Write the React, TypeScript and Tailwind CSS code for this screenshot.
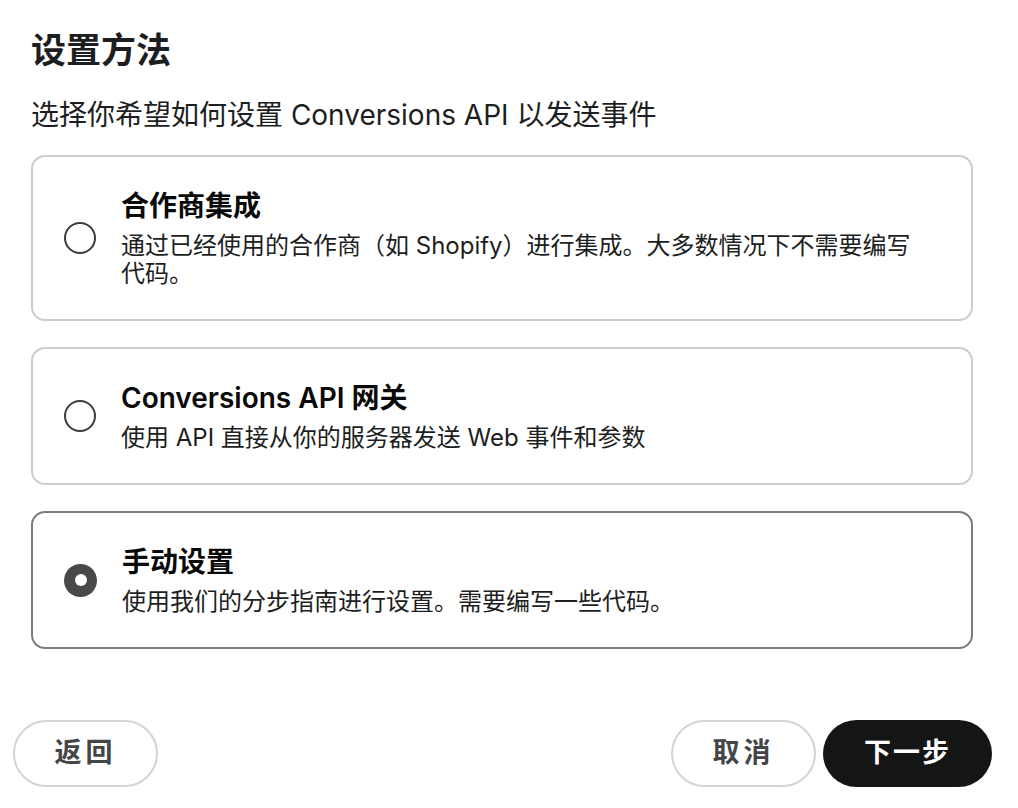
import React, { useState } from 'react'

type Option = {
  id: string
  title: string
  description: string
}

const options: Option[] = [
  {
    id: 'partner',
    title: '合作商集成',
    description: '通过已经使用的合作商（如 Shopify）进行集成。大多数情况下不需要编写代码。',
  },
  {
    id: 'gateway',
    title: 'Conversions API 网关',
    description: '使用 API 直接从你的服务器发送 Web 事件和参数',
  },
  {
    id: 'manual',
    title: '手动设置',
    description: '使用我们的分步指南进行设置。需要编写一些代码。',
  },
]

const font = { fontFamily: 'Inter, "Noto Sans CJK SC", sans-serif' }

const Radio: React.FC<{ checked: boolean }> = ({ checked }) =>
  checked ? (
    <span className="w-[33px] h-[33px] shrink-0 rounded-full bg-[#48494b] flex items-center justify-center">
      <span className="w-[12px] h-[12px] rounded-full bg-white" />
    </span>
  ) : (
    <span className="w-[32px] h-[32px] shrink-0 rounded-full border-2 border-[#3a3b3d] bg-white" />
  )

export default function App() {
  const [selected, setSelected] = useState('manual')

  return (
    <div className="w-[1018px] h-[808px] bg-white text-[#1c1e21] overflow-hidden" style={font}>
      <div className="pl-[31px] pr-[45px] pt-[26px]">
        <h1 className="text-[35px] leading-[48px] font-bold">设置方法</h1>
        <p className="mt-[21px] text-[28px] leading-[40px]">选择你希望如何设置 Conversions API 以发送事件</p>

        <div className="mt-[20px] flex flex-col gap-[26px]">
          {options.map((opt) => {
            const checked = selected === opt.id
            return (
              <button
                key={opt.id}
                onClick={() => setSelected(opt.id)}
                className={`w-full text-left flex items-center gap-[25px] rounded-[14px] border-2 bg-white pl-[31px] pr-[40px] py-[31px] ${
                  checked ? 'border-[#7b7c7e]' : 'border-[#cbcccd]'
                }`}
              >
                <Radio checked={checked} />
                <span className="flex flex-col gap-[8px]">
                  <span className="text-[28px] leading-[36px] font-semibold text-[#0a0a0a]">{opt.title}</span>
                  <span className="text-[24px] leading-[28px] text-[#1c1e21]">{opt.description}</span>
                </span>
              </button>
            )
          })}
        </div>
      </div>

      <div className="mt-[71px] pl-[13px] pr-[26px] flex items-center justify-between">
        <button className="w-[145px] h-[67px] rounded-full border-2 border-[#d4d4d4] bg-white text-[27px] font-semibold tracking-[4px] text-[#444547]">
          返回
        </button>
        <div className="flex items-center gap-[7px]">
          <button className="w-[145px] h-[67px] rounded-full border-2 border-[#d4d4d4] bg-white text-[27px] font-semibold tracking-[4px] text-[#444547]">
            取消
          </button>
          <button className="w-[169px] h-[67px] rounded-full bg-[#141515] text-[27px] font-semibold tracking-[2px] text-white">
            下一步
          </button>
        </div>
      </div>
    </div>
  )
}
